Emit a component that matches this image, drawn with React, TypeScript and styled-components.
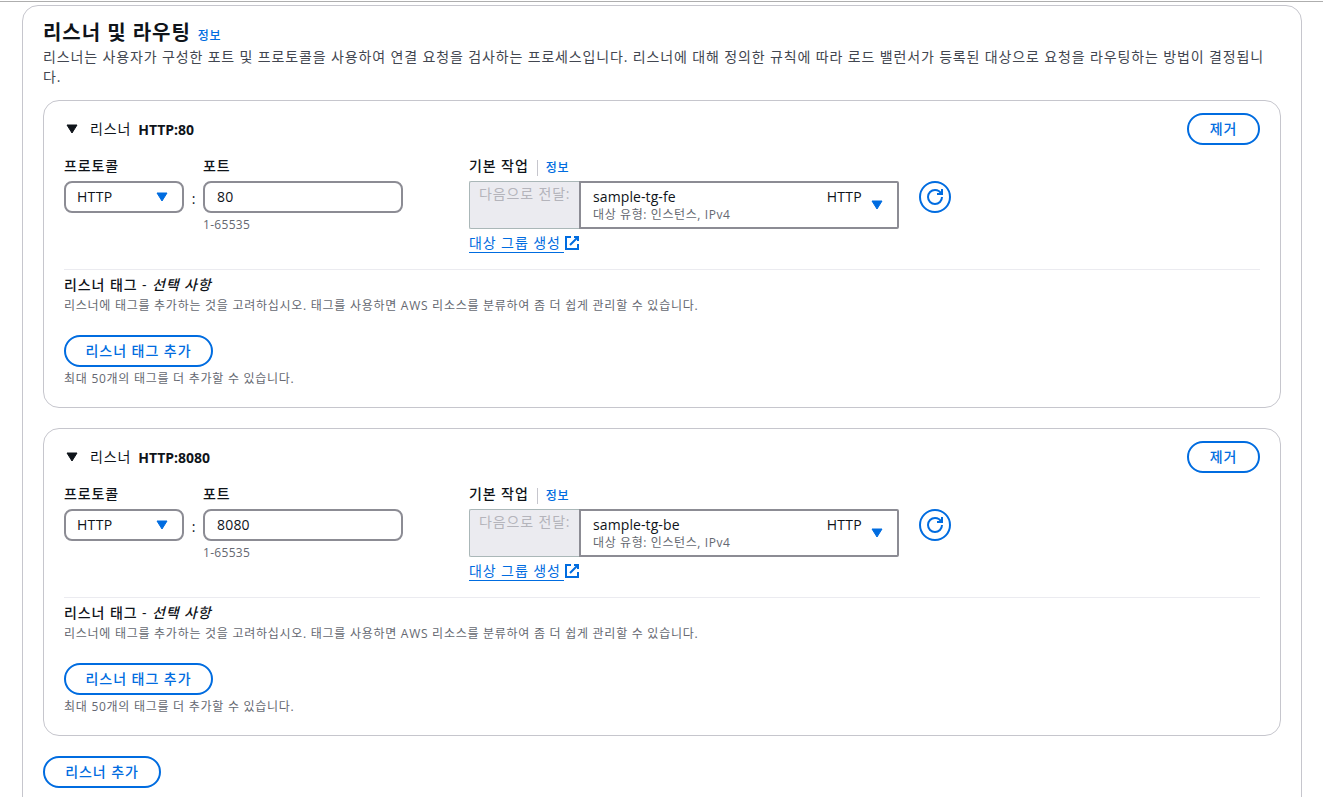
import styled, { createGlobalStyle } from "styled-components";

type Listener = {
  protocol: string;
  port: string;
  targetGroup: string;
};

const listeners: Listener[] = [
  { protocol: "HTTP", port: "80", targetGroup: "sample-tg-fe" },
  { protocol: "HTTP", port: "8080", targetGroup: "sample-tg-be" },
];

function Caret() {
  return (
    <CaretIcon viewBox="0 0 12 10">
      <path d="M1 1h10L6 9z" />
    </CaretIcon>
  );
}

function RefreshIcon() {
  return (
    <LineIcon viewBox="0 0 16 16">
      <path d="M15 8c0 3.87-3.13 7-7 7s-7-3.13-7-7 3.13-7 7-7c2.79 0 5.2 1.63 6.33 4" />
      <path d="M10 5h5V0" />
    </LineIcon>
  );
}

function ExternalIcon() {
  return (
    <LineIcon viewBox="0 0 16 16">
      <path d="M10 2h4v4M6 10l8-8" />
      <path d="M14 9.05V14H2V2h5" />
    </LineIcon>
  );
}

function ListenerCard({ protocol, port, targetGroup }: Listener) {
  return (
    <Card>
      <CardHeader>
        <Toggle>
          <Caret />
          <span>리스너</span>
          <b>
            {protocol}:{port}
          </b>
        </Toggle>
        <PillButton $width={73}>제거</PillButton>
      </CardHeader>
      <Fields>
        <Field $width={120}>
          <Label>프로토콜</Label>
          <Select>
            {protocol}
            <Caret />
          </Select>
        </Field>
        <Colon>:</Colon>
        <Field $width={266}>
          <Label>포트</Label>
          <Input readOnly value={port} />
          <Hint $latin>1-65535</Hint>
        </Field>
        <Field $width={430}>
          <LabelRow>
            <Label>기본 작업</Label>
            <Info $divided>정보</Info>
          </LabelRow>
          <Forward>
            <Prefix>다음으로 전달:</Prefix>
            <TargetSelect>
              <div>
                <TargetName>{targetGroup}</TargetName>
                <TargetMeta>대상 유형: 인스턴스, IPv4</TargetMeta>
              </div>
              <TargetProtocol>{protocol}</TargetProtocol>
              <Caret />
            </TargetSelect>
          </Forward>
          <CreateLink>
            <span>대상 그룹 생성</span>
            <ExternalIcon />
          </CreateLink>
        </Field>
        <RefreshButton>
          <RefreshIcon />
        </RefreshButton>
      </Fields>
      <Tags>
        <TagTitle>
          리스너 태그 - <i>선택 사항</i>
        </TagTitle>
        <TagText>
          리스너에 태그를 추가하는 것을 고려하십시오. 태그를 사용하면 AWS
          리소스를 분류하여 좀 더 쉽게 관리할 수 있습니다.
        </TagText>
        <PillButton $width={149}>리스너 태그 추가</PillButton>
        <Hint>최대 50개의 태그를 더 추가할 수 있습니다.</Hint>
      </Tags>
    </Card>
  );
}

function App() {
  return (
    <Page>
      <GlobalStyle />
      <Panel>
        <TitleRow>
          <Title>리스너 및 라우팅</Title>
          <Info>정보</Info>
        </TitleRow>
        <Description>
          리스너는 사용자가 구성한 포트 및 프로토콜을 사용하여 연결 요청을
          검사하는 프로세스입니다. 리스너에 대해 정의한 규칙에 따라 로드
          밸런서가 등록된 대상으로 요청을 라우팅하는 방법이 결정됩니다.
        </Description>
        <CardList>
          {listeners.map((listener) => (
            <ListenerCard key={listener.port} {...listener} />
          ))}
        </CardList>
        <PillButton $width={118}>리스너 추가</PillButton>
      </Panel>
    </Page>
  );
}

const GlobalStyle = createGlobalStyle`
  * {
    box-sizing: border-box;
  }

  body {
    margin: 0;
    overflow: hidden;
    background: #fff;
    color: #0f141a;
    font: 14px/20px "Open Sans", "Noto Sans CJK KR", sans-serif;
  }

  button,
  input {
    font: inherit;
    color: inherit;
  }
`;

const Page = styled.div`
  height: 796px;
  margin-top: 1px;
  padding: 3px 21px 0 22px;
  overflow: hidden;
  border-top: 1px solid #aeaeae;
`;

const Panel = styled.section`
  height: 840px;
  padding: 15px 20px;
  border: 1px solid #c6c6cd;
  border-radius: 16px;
`;

const TitleRow = styled.div`
  display: flex;
  align-items: baseline;
  gap: 7px;
  height: 26px;
`;

const Title = styled.h2`
  margin: 0;
  font-size: 20px;
  line-height: 24px;
  font-weight: 700;
  letter-spacing: 0.95px;
`;

const Info = styled.a<{ $divided?: boolean }>`
  color: #006ce0;
  font-size: 12px;
  line-height: 16px;
  font-weight: 500;
  letter-spacing: 0.8px;
  ${({ $divided }) =>
    $divided && "padding-left: 8px; border-left: 1px solid #c6c6cd;"}
`;

const Description = styled.p`
  margin: 0 0 13px;
  color: #424650;
  letter-spacing: 0.86px;
  word-break: break-all;
`;

const CardList = styled.div`
  display: grid;
  gap: 20px;
  margin-bottom: 20px;
`;

const Card = styled.article`
  height: 308px;
  padding: 12px 20px;
  border: 1px solid #c6c6cd;
  border-radius: 16px;
`;

const CardHeader = styled.header`
  display: flex;
  justify-content: space-between;
`;

const Toggle = styled.div`
  display: flex;
  align-items: center;
  padding-left: 2px;

  span {
    margin: 0 7px 0 12px;
    letter-spacing: 0.9px;
  }

  b {
    padding-top: 2px;
  }
`;

const PillButton = styled.button<{ $width: number }>`
  width: ${({ $width }) => $width}px;
  height: 32px;
  padding: 0 0 1px;
  border: 2px solid #006ce0;
  border-radius: 16px;
  background: #fff;
  color: #006ce0;
  font-weight: 500;
  letter-spacing: 0.95px;
`;

const Fields = styled.div`
  display: flex;
  height: 125px;
  padding-top: 11px;
  border-bottom: 1px solid #ebebf0;
`;

const Field = styled.div<{ $width: number }>`
  width: ${({ $width }) => $width}px;
`;

const Label = styled.div`
  height: 25px;
  font-weight: 500;
  letter-spacing: 0.9px;
`;

const LabelRow = styled.div`
  display: flex;
  gap: 8px;

  a {
    height: 16px;
    margin-top: 4px;
  }
`;

const Select = styled.div`
  display: flex;
  align-items: center;
  justify-content: space-between;
  height: 32px;
  padding: 0 14px 0 11px;
  border: 2px solid #8c8c94;
  border-radius: 8px;
  letter-spacing: 0.3px;

  svg {
    color: #006ce0;
  }
`;

const Input = styled.input`
  display: block;
  width: 200px;
  height: 32px;
  padding: 0 12px 1px;
  border: 2px solid #8c8c94;
  border-radius: 8px;
  outline: none;
  letter-spacing: 0.2px;
`;

const Colon = styled.div`
  width: 19px;
  padding-top: 33px;
  text-align: center;
`;

const Hint = styled.div<{ $latin?: boolean }>`
  margin-top: 4px;
  color: #656871;
  font-size: 12px;
  line-height: 16px;
  letter-spacing: ${({ $latin }) => ($latin ? 0.3 : 0.73)}px;
`;

const Forward = styled.div`
  display: flex;
  height: 48px;
`;

const Prefix = styled.div`
  width: 110px;
  padding: 2px 0 0 9px;
  border: 1px solid #aab7b8;
  border-right: 0;
  border-radius: 2px 0 0 2px;
  background: #ebebf0;
  color: #b4b4bb;
  letter-spacing: 0.85px;
  white-space: nowrap;
`;

const TargetSelect = styled.div`
  display: flex;
  width: 320px;
  padding: 5px 14px 0 12px;
  border: 2px solid #8c8c94;
  border-radius: 0 2px 2px 0;

  svg {
    margin: 12px 0 0 9px;
    color: #006ce0;
  }
`;

const TargetName = styled.div`
  line-height: 18px;
  letter-spacing: 0.1px;
`;

const TargetMeta = styled.div`
  margin-top: 1px;
  color: #656871;
  font-size: 12px;
  line-height: 16px;
  letter-spacing: 0.6px;
`;

const TargetProtocol = styled.div`
  margin-left: auto;
  line-height: 18px;
  letter-spacing: 0.3px;
`;

const CreateLink = styled.a`
  display: flex;
  align-items: center;
  height: 20px;
  margin-top: 4px;
  color: #006ce0;

  span {
    padding-right: 3px;
    border-bottom: 1px solid #006ce0;
    line-height: 19px;
    letter-spacing: 0.9px;
  }
`;

const RefreshButton = styled.button`
  display: grid;
  place-content: center;
  width: 32px;
  height: 32px;
  margin: 25px 0 0 20px;
  padding: 0;
  border: 2px solid #006ce0;
  border-radius: 50%;
  background: #fff;
  color: #006ce0;
`;

const Tags = styled.div`
  padding-top: 5px;
`;

const TagTitle = styled.div`
  font-weight: 500;
  letter-spacing: 0.9px;
`;

const TagText = styled.p`
  margin: 0 0 20px;
  padding-top: 1px;
  height: 20px;
  color: #656871;
  font-size: 12px;
  letter-spacing: 0.73px;
`;

const CaretIcon = styled.svg`
  width: 12px;
  height: 10px;
  fill: currentColor;
  stroke: currentColor;
  stroke-linejoin: round;
`;

const LineIcon = styled.svg`
  width: 16px;
  height: 16px;
  fill: none;
  stroke: currentColor;
  stroke-width: 2;
`;

export default App;
